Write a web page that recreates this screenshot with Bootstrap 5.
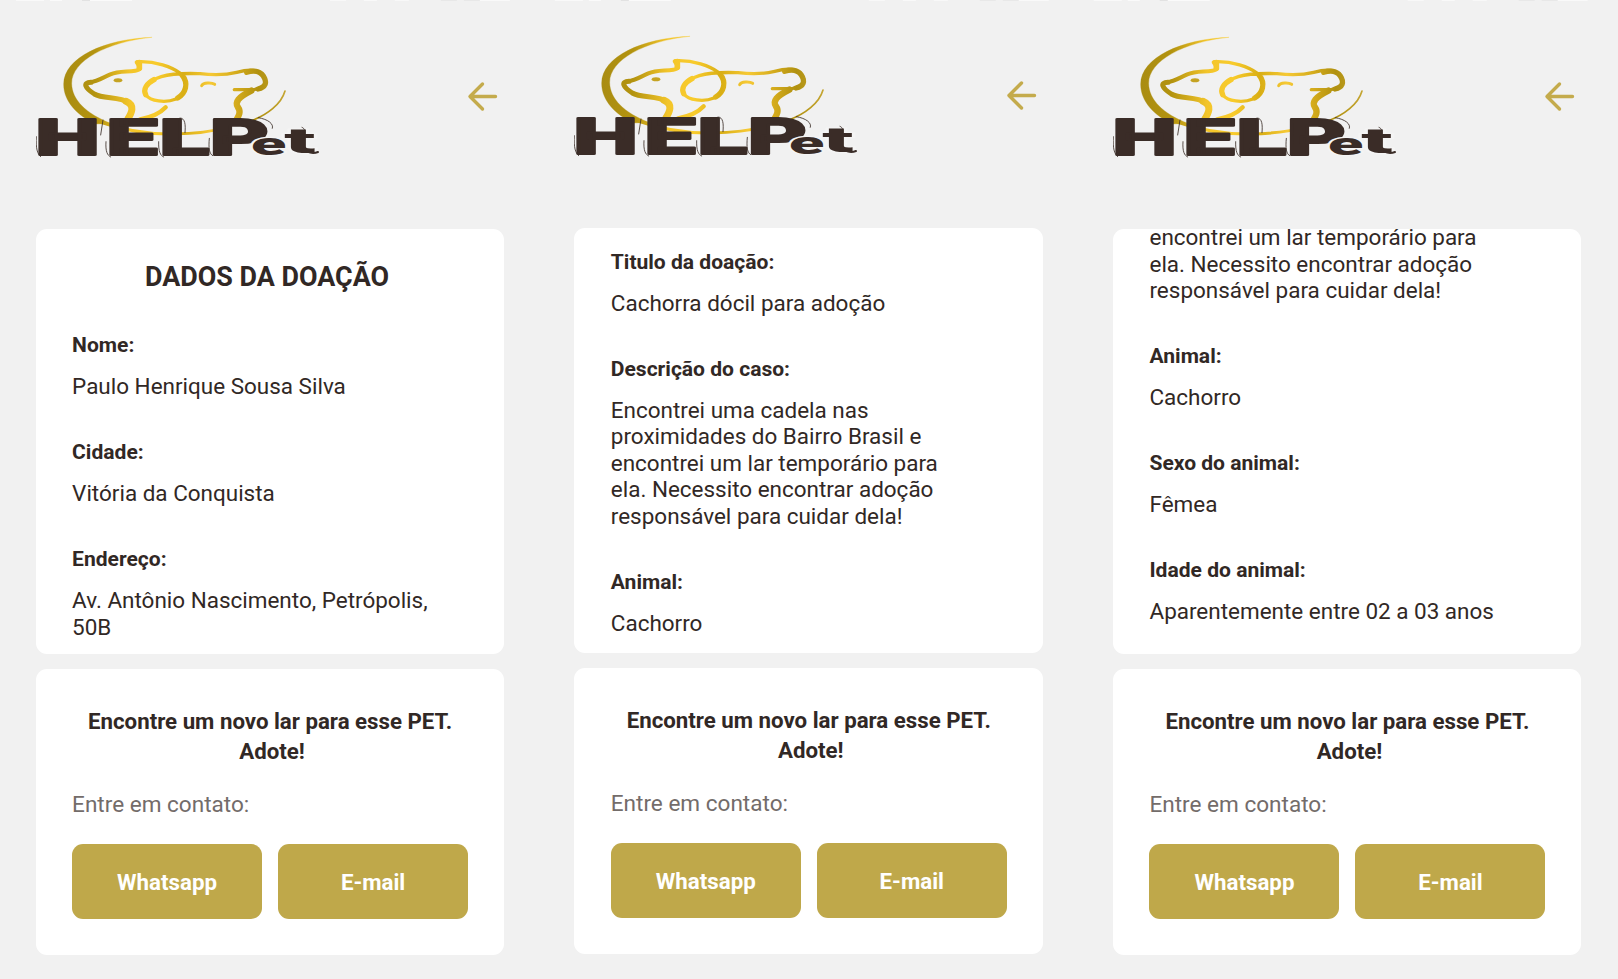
<!DOCTYPE html>
<html lang="pt-BR">
<head>
<meta charset="utf-8">
<meta name="viewport" content="width=device-width, initial-scale=1">
<title>HELPet</title>
<link href="https://cdn.jsdelivr.net/npm/bootstrap@5.3.0/dist/css/bootstrap.min.css" rel="stylesheet">
<style>
body{background:#f1f1f1;color:#312825;font-family:Roboto,"Liberation Sans",sans-serif;overflow:hidden}
.board{width:1618px;height:979px;padding-left:35.6px;gap:70.3px;
background:linear-gradient(90deg,transparent 16px,#f9f9f9 16px 44px,transparent 44px 50px,#fafafa 50px 62px,transparent 62px 82px,#e2e2e2 82px 90px,#fafafa 90px 132px,transparent 132px 330px,#f8f8f8 330px 346px,transparent 346px 364px,#f9f9f9 364px 377px,transparent 377px 395px,#f8f8f8 395px 409px,transparent 409px 441px,#e8e8e8 441px 457px,transparent 457px 464px,#e8e8e8 464px 480px,#f9f9f9 480px 510px,transparent 510px) 0 0/538.9px 1px repeat-x}
.phone{width:468.4px;padding-top:30px}
.phone.raised{padding-top:29px}
.top-area{height:198.5px}
.logo{width:288px;height:130px;overflow:visible}
.logo text{font-family:Roboto,"Liberation Sans",sans-serif;font-weight:900;fill:#3a2c27;stroke:#3a2c27;stroke-linejoin:round}
.logo .low text{stroke:#f4f4f4;paint-order:stroke}
.back{margin:51px 5px 0 0;width:32px;height:32px}
.panel{background:#fff;border-radius:11px}
.data{height:425.5px;overflow:hidden;padding:0 36px 0 36.5px;margin-bottom:15px}
.actions{height:286px;padding:37px 35.9px 0 36.5px}
.title{font-size:26.9px;font-weight:700;line-height:32px;padding-top:32.5px;margin:0 6px 39px 0}
.field-label{font-size:21.05px;font-weight:700;line-height:26.6px;margin-bottom:14.4px}
.field-value{font-size:22.47px;line-height:26.6px;margin-bottom:39.4px;white-space:nowrap}
.start-b{padding-top:21.2px}
.start-c{margin-top:-4.3px;margin-bottom:39.3px}
.cta{font-size:22.25px;font-weight:700;line-height:30px;margin-bottom:23.7px}
.contact{font-size:22.55px;line-height:30px;color:#736c6a;margin-bottom:24.3px}
.btn-gold{--bs-btn-bg:#bfa84a;--bs-btn-color:#fff;--bs-btn-hover-bg:#ae983f;--bs-btn-hover-color:#fff;--bs-btn-border-width:0;--bs-btn-border-radius:11px;--bs-btn-font-size:22.3px;--bs-btn-font-weight:700;height:74.8px;padding-top:8px}
</style>
</head>
<body>
<svg width="0" height="0" class="position-absolute" aria-hidden="true">
<defs>
<linearGradient id="gold" gradientUnits="userSpaceOnUse" x1="131" y1="0" x2="795" y2="0">
<stop offset="0" stop-color="#a98c12"/><stop offset=".14" stop-color="#b3930f"/><stop offset=".3" stop-color="#f3c52a"/><stop offset=".42" stop-color="#f8cb2c"/><stop offset=".54" stop-color="#d9ae14"/><stop offset=".66" stop-color="#f6c935"/><stop offset=".78" stop-color="#d4ab1c"/><stop offset=".88" stop-color="#b1910f"/><stop offset="1" stop-color="#c4a532"/>
</linearGradient>
<symbol id="pets" viewBox="48 30 864 390">
<g fill="none" stroke="url(#gold)" stroke-linecap="round" stroke-linejoin="round">
<path d="M395 52C255 57 131 112 131 193C131 247 175 287 225 312L272 310C200 282 155 240 155 190C155 122 260 66 395 52Z" fill="url(#gold)" stroke-width="1"/>
<path d="M240 306C320 334 400 343 460 342C520 341 580 334 620 322" stroke-width="9"/>
<path d="M795 213C784 252 742 285 690 304" stroke-width="5"/>
<path d="M352 125C405 122 458 142 481 160C510 184 500 222 468 237C436 250 392 244 377 224C365 202 388 181 424 170C462 158 505 160 540 161C585 166 622 164 650 157C680 149 716 147 730 166C745 186 741 203 704 208C680 210 660 208 643 209" stroke-width="10"/>
<path d="M377 224C369 207 380 191 402 179M486 165C507 190 497 220 473 234" stroke-width="16"/>
<path d="M680 157C698 151 719 152 730 168C743 188 736 202 714 207" stroke-width="16"/>
<path d="M694 212C655 232 643 246 654 262C664 276 656 288 648 302" stroke-width="19"/>
<path d="M350 127C356 138 371 148 346 152C318 156 295 152 271 163C246 174 234 184 209 187" stroke-width="12"/>
<path d="M358 128L358 145" stroke-width="17"/>
<path d="M213 187C187 188 195 204 223 222C248 237 298 230 325 247" stroke-width="15"/>
<path d="M318 244C347 256 334 280 324 296" stroke-width="21"/>
<path d="M360 298C396 292 421 279 437 262" stroke-width="13"/>
<path d="M545 197C550 187 575 187 584 193" stroke-width="9"/>
</g>
<ellipse cx="294" cy="181" rx="13" ry="6" fill="#c5a322"/>
</symbol>
<symbol id="marks" viewBox="48 30 864 390">
<g fill="none" stroke="#3a2c27" stroke-linecap="round" stroke-width="2.5">
<path d="M49 350C47 385 52 402 62 410M249 300L242 345M258 365C256 395 262 406 272 411M416 365C415 395 421 407 431 411M480 294C496 294 497 315 495 338M568 355C565 385 568 402 578 407M715 293C745 298 762 312 757 325M846 322C855 325 856 335 853 344"/>
<path d="M862 395C876 401 886 399 894 396" stroke-width="6"/>
</g>
</symbol>
</defs>
</svg>
<main class="board d-flex">

<section class="phone">
<header class="top-area d-flex justify-content-between align-items-start">
<svg class="logo" viewBox="48 30 864 390" role="img" aria-label="HELPet"><use href="#pets" x="48" y="30" width="864" height="390"/>
<g font-size="150" stroke-width="6"><text x="46" y="405" textLength="194" lengthAdjust="spacingAndGlyphs">H</text><text x="259" y="405" textLength="154" lengthAdjust="spacingAndGlyphs">E</text><text x="418" y="405" textLength="150" lengthAdjust="spacingAndGlyphs">L</text><text x="569" y="405" textLength="178" lengthAdjust="spacingAndGlyphs">P</text></g>
<g class="low" stroke-width="8"><text x="693" y="404" font-size="92" textLength="106" lengthAdjust="spacingAndGlyphs">e</text><text x="793" y="400" font-size="104" textLength="94" lengthAdjust="spacingAndGlyphs">t</text></g><use href="#marks" x="48" y="30" width="864" height="390"/></svg>
<svg class="back" viewBox="0 0 32 32" fill="none" stroke="#c4ab4c" stroke-width="3.4" stroke-linecap="round" stroke-linejoin="round"><path d="M28.500 15.500H3.500M15.500 3L3 15.500L15.500 28"/></svg>
</header>
<article class="panel data">
<h1 class="title text-center">DADOS DA DOAÇÃO</h1>
<div class="field-label">Nome:</div><div class="field-value">Paulo Henrique Sousa Silva</div>
<div class="field-label">Cidade:</div><div class="field-value">Vitória da Conquista</div>
<div class="field-label">Endereço:</div><div class="field-value">Av. Antônio Nascimento, Petrópolis,<br>50B</div>
</article>
<article class="panel actions">
<h2 class="cta text-center">Encontre um novo lar para esse PET.<br><span class="ps-1">Adote!</span></h2>
<p class="contact">Entre em contato:</p>
<div class="d-flex gap-3"><button class="btn btn-gold flex-fill w-50">Whatsapp</button><button class="btn btn-gold flex-fill w-50">E-mail</button></div>
</article>
</section>

<section class="phone raised">
<header class="top-area d-flex justify-content-between align-items-start">
<svg class="logo" viewBox="48 30 864 390" role="img" aria-label="HELPet"><use href="#pets" x="48" y="30" width="864" height="390"/>
<g font-size="150" stroke-width="6"><text x="46" y="405" textLength="194" lengthAdjust="spacingAndGlyphs">H</text><text x="259" y="405" textLength="154" lengthAdjust="spacingAndGlyphs">E</text><text x="418" y="405" textLength="150" lengthAdjust="spacingAndGlyphs">L</text><text x="569" y="405" textLength="178" lengthAdjust="spacingAndGlyphs">P</text></g>
<g class="low" stroke-width="8"><text x="693" y="404" font-size="92" textLength="106" lengthAdjust="spacingAndGlyphs">e</text><text x="793" y="400" font-size="104" textLength="94" lengthAdjust="spacingAndGlyphs">t</text></g><use href="#marks" x="48" y="30" width="864" height="390"/></svg>
<svg class="back" viewBox="0 0 32 32" fill="none" stroke="#c4ab4c" stroke-width="3.4" stroke-linecap="round" stroke-linejoin="round"><path d="M28.500 15.500H3.500M15.500 3L3 15.500L15.500 28"/></svg>
</header>
<article class="panel data start-b">
<div class="field-label">Titulo da doação:</div><div class="field-value">Cachorra dócil para adoção</div>
<div class="field-label">Descrição do caso:</div><div class="field-value">Encontrei uma cadela nas<br>proximidades do Bairro Brasil e<br>encontrei um lar temporário para<br>ela. Necessito encontrar adoção<br>responsável para cuidar dela!</div>
<div class="field-label">Animal:</div><div class="field-value">Cachorro</div>
</article>
<article class="panel actions">
<h2 class="cta text-center">Encontre um novo lar para esse PET.<br><span class="ps-1">Adote!</span></h2>
<p class="contact">Entre em contato:</p>
<div class="d-flex gap-3"><button class="btn btn-gold flex-fill w-50">Whatsapp</button><button class="btn btn-gold flex-fill w-50">E-mail</button></div>
</article>
</section>

<section class="phone">
<header class="top-area d-flex justify-content-between align-items-start">
<svg class="logo" viewBox="48 30 864 390" role="img" aria-label="HELPet"><use href="#pets" x="48" y="30" width="864" height="390"/>
<g font-size="150" stroke-width="6"><text x="46" y="405" textLength="194" lengthAdjust="spacingAndGlyphs">H</text><text x="259" y="405" textLength="154" lengthAdjust="spacingAndGlyphs">E</text><text x="418" y="405" textLength="150" lengthAdjust="spacingAndGlyphs">L</text><text x="569" y="405" textLength="178" lengthAdjust="spacingAndGlyphs">P</text></g>
<g class="low" stroke-width="8"><text x="693" y="404" font-size="92" textLength="106" lengthAdjust="spacingAndGlyphs">e</text><text x="793" y="400" font-size="104" textLength="94" lengthAdjust="spacingAndGlyphs">t</text></g><use href="#marks" x="48" y="30" width="864" height="390"/></svg>
<svg class="back" viewBox="0 0 32 32" fill="none" stroke="#c4ab4c" stroke-width="3.4" stroke-linecap="round" stroke-linejoin="round"><path d="M28.500 15.500H3.500M15.500 3L3 15.500L15.500 28"/></svg>
</header>
<article class="panel data">
<div class="field-value start-c">encontrei um lar temporário para<br>ela. Necessito encontrar adoção<br>responsável para cuidar dela!</div>
<div class="field-label">Animal:</div><div class="field-value">Cachorro</div>
<div class="field-label">Sexo do animal:</div><div class="field-value">Fêmea</div>
<div class="field-label">Idade do animal:</div><div class="field-value">Aparentemente entre 02 a 03 anos</div>
</article>
<article class="panel actions">
<h2 class="cta text-center">Encontre um novo lar para esse PET.<br><span class="ps-1">Adote!</span></h2>
<p class="contact">Entre em contato:</p>
<div class="d-flex gap-3"><button class="btn btn-gold flex-fill w-50">Whatsapp</button><button class="btn btn-gold flex-fill w-50">E-mail</button></div>
</article>
</section>
</main>
<script src="https://cdn.jsdelivr.net/npm/bootstrap@5.3.0/dist/js/bootstrap.bundle.min.js"></script>
</body>
</html>
